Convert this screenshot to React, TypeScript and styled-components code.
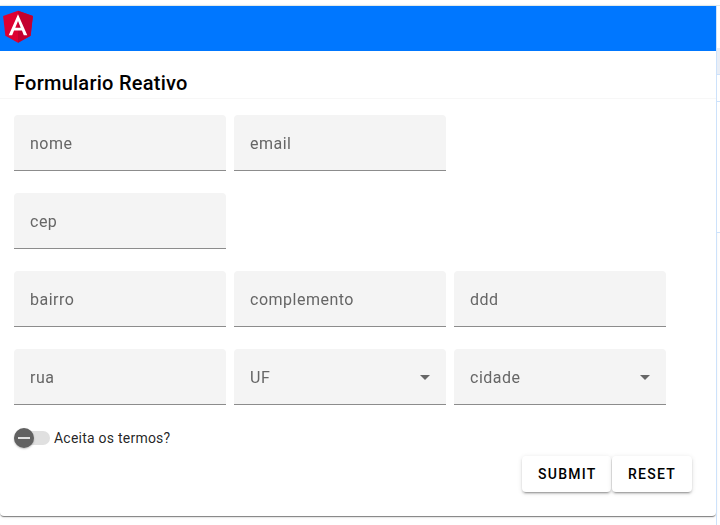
import React from "react";
import styled, { createGlobalStyle } from "styled-components";

const GlobalStyle = createGlobalStyle`
  * { box-sizing: border-box; }
  body {
    margin: 0;
    background: #fff;
    font-family: Roboto, "Liberation Sans", sans-serif;
    overflow: hidden;
  }
`;

const Page = styled.div`
  display: flex;
  width: 720px;
  height: 525px;
  padding-top: 5px;
`;

const Window = styled.div`
  display: flex;
  flex-direction: column;
  width: 716px;
  height: 511px;
  border-top: 1px solid #dfe9ea;
  border-radius: 0 0 4px 4px;
  box-shadow: 0 2px 1px -1px rgba(0, 0, 0, 0.3), 0 1px 1px rgba(0, 0, 0, 0.22),
    0 1px 3px rgba(0, 0, 0, 0.12);
`;

const Toolbar = styled.header`
  height: 45px;
  flex: none;
  background: #0077ff;
`;

const Logo = styled.svg`
  display: block;
  width: 40px;
  height: 40px;
  margin-left: -2px;
`;

const CardHeader = styled.div`
  height: 48px;
  padding: 16px 14px 0;
  border-bottom: 1px solid #f7f7f7;
`;

const Title = styled.h1`
  margin: 0;
  font-size: 20px;
  font-weight: 500;
  line-height: 32px;
  letter-spacing: 0.25px;
  color: #000;
`;

const Form = styled.form`
  display: flex;
  flex-direction: column;
  padding: 16px 14px 0;
`;

const Row = styled.div`
  display: flex;
  gap: 8px;
  margin-bottom: 22px;
`;

const Field = styled.div`
  display: flex;
  align-items: center;
  justify-content: space-between;
  width: 212px;
  height: 56px;
  padding: 1px 16px 0;
  background: #f4f4f4;
  border-bottom: 1px solid #8c8c8c;
  border-radius: 4px 4px 0 0;
`;

const FieldLabel = styled.span`
  font-size: 16px;
  line-height: 24px;
  letter-spacing: 0.5px;
  color: #666;
  transform: translateY(0.5px);
  will-change: transform;
`;

const Arrow = styled.svg`
  width: 10px;
  height: 5px;
  fill: #666;
`;

const ToggleRow = styled.label`
  display: flex;
  align-items: center;
  height: 20px;
  margin-top: 1px;
  font-size: 14px;
  line-height: 20px;
  letter-spacing: 0.23px;
  color: rgba(0, 0, 0, 0.87);
`;

const Track = styled.span`
  display: flex;
  align-items: center;
  width: 36px;
  height: 14px;
  margin-right: 4px;
  border-radius: 7px;
  background: #e0e0e0;
`;

const Thumb = styled.span`
  display: flex;
  align-items: center;
  justify-content: center;
  width: 20px;
  height: 20px;
  border-radius: 50%;
  background: #616161;
  box-shadow: 0 1px 2px rgba(0, 0, 0, 0.25);

  &::before {
    content: "";
    width: 12px;
    height: 2px;
    background: #e0e0e0;
  }
`;

const Actions = styled.div`
  display: flex;
  justify-content: flex-end;
  gap: 1px;
  margin-top: 8px;
  padding-right: 10px;
`;

const Button = styled.button<{ $width: number }>`
  width: ${(p) => p.$width}px;
  height: 36px;
  padding: 0 0 0 16px;
  border: 0;
  border-radius: 4px;
  background: #fff;
  box-shadow: 0 3px 1px -2px rgba(0, 0, 0, 0.2), 0 2px 2px rgba(0, 0, 0, 0.14),
    0 1px 5px rgba(0, 0, 0, 0.12);
  font-family: inherit;
  font-size: 14px;
  font-weight: 500;
  letter-spacing: 1.25px;
  text-align: left;
  color: #000;
`;

const SideStrip = styled.aside`
  display: flex;
  flex-direction: column;
  width: 4px;
  height: 520px;
  border-left: 1px solid #cde2fb;
  border-top: 1px solid #dfe9ea;
`;

const Cell = styled.div<{ $height: number; $shaded?: boolean; $line?: boolean }>`
  flex: none;
  height: ${(p) => p.$height}px;
  background: ${(p) => (p.$shaded ? "#e9eef6" : "#fff")};
  border-bottom: ${(p) => (p.$line ? "1px solid #cde2fb" : "0")};
`;

type FieldData = { label: string; select?: boolean };

const rows: FieldData[][] = [
  [{ label: "nome" }, { label: "email" }],
  [{ label: "cep" }],
  [{ label: "bairro" }, { label: "complemento" }, { label: "ddd" }],
  [{ label: "rua" }, { label: "UF", select: true }, { label: "cidade", select: true }],
];

const AngularLogo = () => (
  <Logo viewBox="0 0 250 250" aria-label="Angular">
    <path fill="#dd0031" d="M125 30 31.9 63.2l14.2 123.1L125 230l78.9-43.7 14.2-123.1z" />
    <path fill="#c3002f" d="M125 30v200l78.9-43.7 14.2-123.1z" />
    <path
      fill="#fff"
      d="M125 52.1 66.8 182.6h21.7l11.7-29.2h49.4l11.7 29.2H183zm17 83.3h-34l17-40.9z"
    />
  </Logo>
);

export default function App() {
  return (
    <>
      <GlobalStyle />
      <Page>
        <Window>
          <Toolbar>
            <AngularLogo />
          </Toolbar>
          <CardHeader>
            <Title>Formulario Reativo</Title>
          </CardHeader>
          <Form onSubmit={(e) => e.preventDefault()}>
            {rows.map((row, i) => (
              <Row key={i}>
                {row.map(({ label, select }) => (
                  <Field key={label}>
                    <FieldLabel>{label}</FieldLabel>
                    {select && (
                      <Arrow viewBox="0 0 10 5">
                        <path d="M0 0h10L5 5z" />
                      </Arrow>
                    )}
                  </Field>
                ))}
              </Row>
            ))}
            <ToggleRow>
              <Track>
                <Thumb />
              </Track>
              Aceita os termos?
            </ToggleRow>
            <Actions>
              <Button type="submit" $width={89}>SUBMIT</Button>
              <Button type="reset" $width={80}>RESET</Button>
            </Actions>
          </Form>
        </Window>
        <SideStrip>
          <Cell $height={42} />
          <Cell $height={27} $shaded $line />
          <Cell $height={27} $line />
          <Cell $height={131} $line />
        </SideStrip>
      </Page>
    </>
  );
}
